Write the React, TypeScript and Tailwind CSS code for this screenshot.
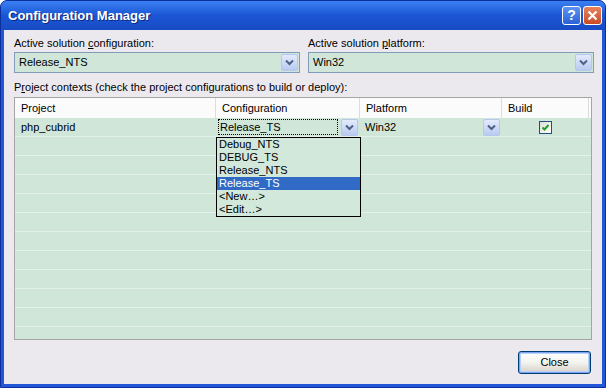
const font = "font-['Liberation_Sans',Arial,sans-serif]";

function Chevron() {
  return (
    <svg width="9" height="7" viewBox="0 0 9 7">
      <path d="M1 1.5 L4.5 5 L8 1.5" stroke="#4d6185" strokeWidth="2" fill="none" />
    </svg>
  );
}

function DropButton() {
  return (
    <div className="flex items-center justify-center w-[17px] h-[17px] rounded-[2px] border border-[#b6c7ee] bg-gradient-to-b from-[#e3eafc] to-[#b9caf1]">
      <Chevron />
    </div>
  );
}

function Combo({ value }: { value: string }) {
  return (
    <div className="flex items-center w-[286px] h-[21px] border border-[#7f9db9] bg-[#cfe6d8] pl-[4px] pr-[1px]">
      <span className="flex-1">{value}</span>
      <DropButton />
    </div>
  );
}

const options = ["Debug_NTS", "DEBUG_TS", "Release_NTS", "Release_TS", "<New...>", "<Edit...>"];

export default function App() {
  return (
    <div className={`w-[606px] h-[388px] flex flex-col bg-[#2457d8] border border-[#0b2f9c] rounded-t-[7px] overflow-hidden text-[11px] text-black ${font}`}>
      {/* Title bar */}
      <div className="h-[29px] shrink-0 flex items-center pl-[7px] pr-[3px] bg-gradient-to-b from-[#3a80f2] via-[#1b55d4] to-[#184bc4]">
        <span className="flex-1 text-white font-bold text-[13px] [text-shadow:1px_1px_0_#0b2a80]">
          Configuration Manager
        </span>
        <div className="flex gap-[2px]">
          <div className="w-[19px] h-[19px] rounded-[3px] border border-white bg-gradient-to-b from-[#5d93f2] to-[#2a62d8] flex items-center justify-center text-white font-bold text-[14px]">
            ?
          </div>
          <div className="w-[19px] h-[19px] rounded-[3px] border border-white bg-gradient-to-b from-[#e8835d] to-[#c84a23] flex items-center justify-center">
            <svg width="11" height="11" viewBox="0 0 11 11">
              <path d="M1.5 1.5 L9.5 9.5 M9.5 1.5 L1.5 9.5" stroke="white" strokeWidth="2.2" />
            </svg>
          </div>
        </div>
      </div>

      {/* Body */}
      <div className="flex-1 mx-[3px] mb-[3px] bg-[#ece9ee] flex flex-col pl-[10px] pr-[11px] pt-[7px]">
        <div className="flex gap-[8px]">
          <div className="flex flex-col gap-[2px]">
            <span className="leading-[13px]">Active solution <u>c</u>onfiguration:</span>
            <Combo value="Release_NTS" />
          </div>
          <div className="flex flex-col gap-[2px]">
            <span className="leading-[13px]">Active solution <u>p</u>latform:</span>
            <Combo value="Win32" />
          </div>
        </div>

        <span className="leading-[13px] mt-[8px]">
          P<u>r</u>oject contexts (check the project configurations to build or deploy):
        </span>

        {/* Grid */}
        <div className="relative mt-[3px] w-[578px] h-[243px] border border-[#a5a5a5] bg-[#cfe6d8] overflow-hidden">
          <div className="flex h-[20px] bg-[#fbfbfb]">
            <div className="w-[201px] border-r border-[#dcdbe0] pl-[6px] flex items-center">Project</div>
            <div className="w-[144px] border-r border-[#dcdbe0] pl-[6px] flex items-center">Configuration</div>
            <div className="w-[142px] border-r border-[#dcdbe0] pl-[6px] flex items-center">Platform</div>
            <div className="w-[87px] border-r border-[#dcdbe0] pl-[6px] flex items-center">Build</div>
          </div>

          {/* First row */}
          <div className="flex h-[19px] border-b border-[#e4f1ea]">
            <div className="w-[201px] pl-[6px] flex items-center">php_cubrid</div>
            <div className="w-[144px] flex items-center pl-[2px] gap-[3px]">
              <div className="w-[120px] h-[16px] border border-dotted border-black pl-[1px] flex items-center">
                Release_TS
              </div>
              <DropButton />
            </div>
            <div className="w-[142px] flex items-center pl-[5px] pr-[2px]">
              <span className="flex-1">Win32</span>
              <DropButton />
            </div>
            <div className="w-[87px] flex items-center justify-center">
              <div className="w-[13px] h-[13px] border border-[#1c5180] bg-gradient-to-br from-[#dcdcd7] to-white flex items-center justify-center">
                <svg width="9" height="9" viewBox="0 0 9 9">
                  <path d="M1.5 4.5 L3.5 6.5 L7.5 2" stroke="#21a121" strokeWidth="2" fill="none" />
                </svg>
              </div>
            </div>
          </div>

          {Array.from({ length: 11 }).map((_, i) => (
            <div key={i} className="h-[19px] border-b border-[#e4f1ea]" />
          ))}

          {/* Dropdown list */}
          <div className="absolute left-[201px] top-[39px] w-[145px] border border-black bg-[#d2e8db] flex flex-col">
            {options.map((o) => (
              <div
                key={o}
                className={`h-[13px] leading-[13px] pl-[2px] ${o === "Release_TS" ? "bg-[#316ac5] text-white" : ""}`}
              >
                {o.replace("...", "…")}
              </div>
            ))}
          </div>
        </div>

        <div className="flex justify-end mt-[11px]">
          <div className="w-[73px] h-[23px] rounded-[3px] border border-[#003c74] bg-gradient-to-b from-white via-[#f3f3ef] to-[#d6d0c5] shadow-[inset_0_0_0_1px_#7ba6ee,inset_0_0_0_2px_#b9d1fa] flex items-center justify-center">
            Close
          </div>
        </div>
      </div>
    </div>
  );
}
